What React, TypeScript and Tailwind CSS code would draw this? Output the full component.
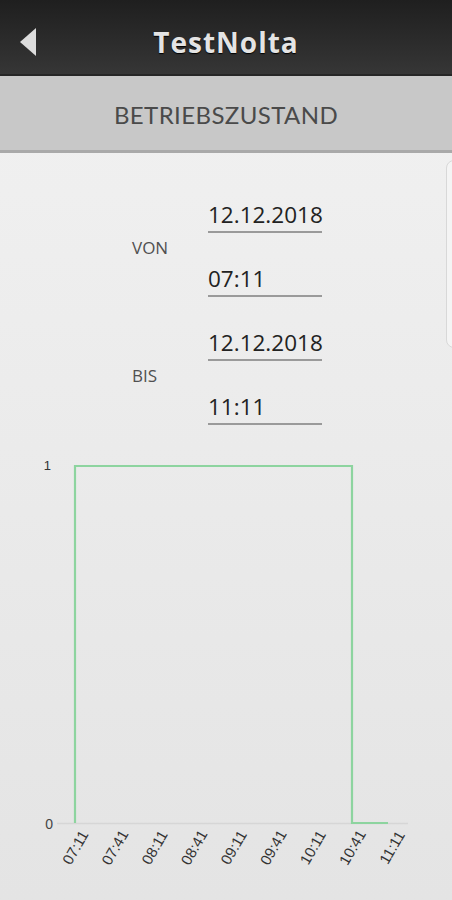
import React from "react";

const ticks = ["07:11", "07:41", "08:11", "08:41", "09:11", "09:41", "10:11", "10:41", "11:11"];

function Chart() {
  const off = 425;
  const x0 = 75;
  const step = (352 - 75) / 7;
  const y = (py: number) => py - off;
  return (
    <svg width={452} height={475} className="block">
      <line x1={57} x2={408} y1={y(823.5)} y2={y(823.5)} stroke="#d6d6d6" strokeWidth={1.5} />
      <text x={51} y={y(470)} textAnchor="end" fontSize={13} fill="#333" fontFamily="'Liberation Sans', Arial, sans-serif">1</text>
      <text x={53} y={y(829)} textAnchor="end" fontSize={14} fill="#444" fontFamily="'Liberation Sans', Arial, sans-serif">0</text>
      <polyline
        points={`75,${y(823)} 75,${y(466)} 352,${y(466)} 352,${y(823)} 388,${y(823)}`}
        fill="none"
        stroke="#8dd49f"
        strokeWidth={2.2}
      />
      {ticks.map((t, i) => {
        const tx = x0 + step * i + 1.5;
        const ty = y(848);
        return (
          <text
            key={t}
            x={tx}
            y={ty}
            textAnchor="middle"
            dominantBaseline="middle"
            fontSize={15}
            fill="#333"
            fontFamily="'Liberation Sans', Arial, sans-serif"
            transform={`rotate(-60 ${tx} ${ty})`}
          >
            {t}
          </text>
        );
      })}
    </svg>
  );
}

function Field({ value }: { value: string }) {
  return (
    <div className="h-[64px] flex items-end">
      <div className="w-[114px] border-b-2 border-[#9a9a9a] pb-[1px] text-[22.5px] leading-[30px] text-[#222]" style={{ fontFamily: "'Open Sans', sans-serif" }}>
        {value}
      </div>
    </div>
  );
}

function Group({ label, date, time }: { label: string; date: string; time: string }) {
  return (
    <div className="flex items-center">
      <div className="w-[76px] pl-[132px] mt-[30px] box-content text-[17px] text-[#505050]" style={{ fontFamily: "'Open Sans', sans-serif" }}>
        {label}
      </div>
      <div className="flex flex-col">
        <Field value={date} />
        <Field value={time} />
      </div>
    </div>
  );
}

export default function App() {
  return (
    <div className="w-[452px] h-[900px] overflow-hidden bg-gradient-to-b from-[#f2f2f2] to-[#e4e4e4]">
      <div className="h-[76px] pt-[10px] grid grid-cols-[60px_1fr_60px] items-center bg-gradient-to-b from-[#1f1f1f] to-[#363636] border-b-[2px] border-[#262626]">
        <div className="flex items-center pl-[19px]">
          <svg width="18" height="30" viewBox="0 0 18 30">
            <polygon points="17,1 17,29 1,15" fill="#dcdcdc" />
          </svg>
        </div>
        <div className="text-center text-[28px] font-bold tracking-[1px] text-[#e4e4e4]" style={{ fontFamily: "'Open Sans', sans-serif", textShadow: "0 1px 1px #000" }}>
          TestNolta
        </div>
        <div />
      </div>
      <div className="h-[77px] pt-[3px] bg-[#c8c8c8] border-b-[3px] border-[#a9a9a9] flex items-center justify-center">
        <span className="text-[24px] text-[#4a4a4a] tracking-[0.4px]" style={{ fontFamily: "Lato, sans-serif" }}>
          BETRIEBSZUSTAND
        </span>
      </div>
      <div className="relative pt-[16px]">
        <div className="absolute left-[446px] top-[7px] w-[20px] h-[188px] rounded-[8px] border border-[#d8d8d8] bg-[#f4f4f4]" />
        <Group label="VON" date="12.12.2018" time="07:11" />
        <Group label="BIS" date="12.12.2018" time="11:11" />
        <Chart />
      </div>
    </div>
  );
}
